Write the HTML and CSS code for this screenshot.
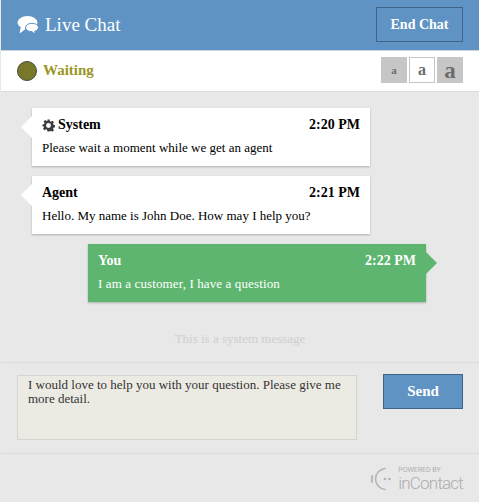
FILE: index.html
```html
<!DOCTYPE html>
<html lang="en">
<head>
  <meta charset="UTF-8">
  <meta name="viewport" content="width=device-width, initial-scale=1.0">
  <title>Live Chat</title>
  <link rel="stylesheet" href="styles.css">
</head>
<body>
  <header class="chat-header">
    <div class="chat-title">
      <svg class="chat-icon" width="22" height="20" viewBox="0 0 22 20">
        <ellipse cx="10.500" cy="7.500" rx="10" ry="6.500" fill="#fff"/>
        <path fill="#fff" d="M4 11l-1.500 7.500L10 13z"/>
        <ellipse cx="15" cy="12.500" rx="6.500" ry="4.200" fill="#fff" stroke="#5f93c3"/>
        <path fill="#fff" d="M14.500 15.500l3 3-.5-3.500z"/>
      </svg>
      <h1>Live Chat</h1>
    </div>
    <button class="end-chat">End Chat</button>
  </header>

  <div class="status-bar">
    <div class="status">
      <span class="status-dot"></span>
      <span class="status-text">Waiting</span>
    </div>
    <div class="font-sizes">
      <button class="size-btn size-small">a</button>
      <button class="size-btn size-medium active">a</button>
      <button class="size-btn size-large">a</button>
    </div>
  </div>

  <main class="messages">
    <div class="message from-them">
      <div class="message-head">
        <span class="sender">
          <svg class="gear" width="13" height="13" viewBox="0 0 24 24">
            <path fill="#3c3c3c" fill-rule="evenodd" d="M10 1h4l.7 3.200 1.800.8 2.800-1.800 2.800 2.800-1.800 2.800.8 1.800 3.100.700v4l-3.100.7-.8 1.800 1.800 2.800-2.800 2.800-2.800-1.800-1.800.8L14 23h-4l-.7-3.100-1.800-.8-2.800 1.800-2.800-2.800 1.800-2.800-.8-1.800L.9 14v-4l3.100-.7.8-1.800L3 4.700 5.700 2l2.800 1.800 1.800-.8zM12 7.500a4.500 4.500 0 1 0 0 9 4.500 4.500 0 0 0 0-9z"/>
          </svg>
          System
        </span>
        <span class="time">2:20 PM</span>
      </div>
      <p>Please wait a moment while we get an agent</p>
    </div>

    <div class="message from-them">
      <div class="message-head">
        <span class="sender">Agent</span>
        <span class="time">2:21 PM</span>
      </div>
      <p>Hello. My name is John Doe. How may I help you?</p>
    </div>

    <div class="message from-you">
      <div class="message-head">
        <span class="sender">You</span>
        <span class="time">2:22 PM</span>
      </div>
      <p>I am a customer, I have a question</p>
    </div>

    <p class="system-message">This is a system message</p>
  </main>

  <div class="composer">
    <textarea class="composer-input">I would love to help you with your question. Please give me more detail.</textarea>
    <button class="send">Send</button>
  </div>

  <footer class="chat-footer">
    <div class="brand">
      <svg width="22" height="24" viewBox="0 0 22 24">
        <g fill="none" stroke="#b4b4b4" stroke-linecap="round">
          <path stroke-width="1.500" d="M15 1.500C9.500 2.500 5.500 6.500 5.500 12s4 9.500 9.500 10.500"/>
          <path stroke-width="1.800" d="M2 9v6"/>
        </g>
        <circle cx="15" cy="12" r="1.300" fill="#b4b4b4"/>
        <circle cx="19.500" cy="12" r="1.300" fill="#b4b4b4"/>
      </svg>
      <div class="brand-text">
        <span class="powered">POWERED BY</span>
        <span class="brand-name">inContact</span>
      </div>
    </div>
  </footer>
</body>
</html>
```

FILE: styles.css
```css
* {
  box-sizing: border-box;
}

body {
  font-family: "Liberation Serif", serif;
  margin: 0;
  padding: 0 0 0 1px;
  height: 502px;
  overflow: hidden;
  background: #e8e8e8;
  color: #000;
  font-size: 13px;
}

button {
  font-family: inherit;
  cursor: pointer;
}

.chat-header {
  height: 51px;
  background: #5f93c3;
  border-bottom: 1px solid #c9d4de;
  display: flex;
  align-items: center;
  justify-content: space-between;
  padding: 0 16px 1px 16px;
}

.chat-title {
  display: flex;
  align-items: center;
  gap: 6px;
}

.chat-title h1 {
  font-size: 19px;
  font-weight: 400;
  margin: 0;
  color: #fff;
}

.end-chat {
  width: 87px;
  height: 35px;
  background: #5f93c3;
  border: 1px solid #3f6488;
  color: #fff;
  font-size: 14px;
  font-weight: 700;
}

.status-bar {
  height: 41px;
  background: #fff;
  border-bottom: 1px solid #dcdcdc;
  display: flex;
  align-items: center;
  justify-content: space-between;
  padding: 0 16px;
}

.status {
  display: flex;
  align-items: center;
  gap: 6px;
}

.status-dot {
  width: 20px;
  height: 20px;
  border-radius: 50%;
  background: #78782a;
  border: 1px solid #4a4a3a;
}

.status-text {
  color: #9b9626;
  font-size: 15px;
  font-weight: 700;
  padding-bottom: 2px;
}

.font-sizes {
  display: flex;
  gap: 2px;
  padding-bottom: 2px;
}

.size-btn {
  width: 26px;
  height: 26px;
  padding: 0;
  background: #c6c6c6;
  border: 0;
  color: #6c6c6c;
  font-weight: 700;
  line-height: 1;
}

.size-small {
  font-size: 11px;
}

.size-medium {
  font-size: 16px;
}

.size-large {
  font-size: 23px;
}

.size-btn.active {
  background: #fff;
  border: 1px solid #c6c6c6;
}

.messages {
  height: 270px;
  padding: 16px 0 0;
  display: flex;
  flex-direction: column;
  gap: 10px;
}

.message {
  position: relative;
  width: 338px;
  height: 58px;
  padding: 8px 10px;
  box-shadow: 0 1px 2px rgba(0, 0, 0, 0.25);
}

.message p {
  margin: 5px 0 0;
  line-height: 18px;
}

.message-head {
  display: flex;
  justify-content: space-between;
  font-size: 14px;
  font-weight: 700;
  line-height: 18px;
}

.sender {
  display: flex;
  align-items: center;
  gap: 3px;
}

.from-them {
  margin-left: 31px;
  background: #fff;
}

.from-them::before {
  content: "";
  position: absolute;
  left: -11px;
  top: 8px;
  border: 11px solid transparent;
  border-left: 0;
  border-right-color: #fff;
}

.from-you {
  margin-left: 87px;
  background: #5eb56f;
  color: #fff;
}

.from-you p {
  letter-spacing: 0.12px;
}

.from-you::after {
  content: "";
  position: absolute;
  right: -11px;
  top: 8px;
  border: 11px solid transparent;
  border-right: 0;
  border-left-color: #5eb56f;
}

.system-message {
  margin: 18px 0 0;
  text-align: center;
  color: #cfcfcf;
  line-height: 18px;
}

.composer {
  height: 91px;
  border-top: 1px solid #dcdcdc;
  display: flex;
  align-items: flex-start;
  justify-content: space-between;
  padding: 11px 16px 0;
}

.composer-input {
  width: 340px;
  height: 65px;
  margin-top: 1px;
  padding: 2px 10px 0;
  background: #ecebe3;
  border: 1px solid #d4d4d4;
  border-radius: 0;
  font-family: inherit;
  font-size: 13px;
  line-height: 14px;
  color: #333;
  resize: none;
  outline: none;
}

.send {
  width: 80px;
  height: 35px;
  background: #5f93c3;
  border: 1px solid #3f6488;
  color: #fff;
  font-size: 15px;
  font-weight: 700;
}

.chat-footer {
  border-top: 1px solid #dcdcdc;
  display: flex;
  justify-content: flex-end;
  padding: 12px 16px 0;
}

.brand {
  display: flex;
  align-items: center;
  gap: 6px;
  color: #aeaeae;
  font-family: Roboto, sans-serif;
}

.brand-text {
  display: flex;
  flex-direction: column;
}

.powered {
  font-size: 7px;
  line-height: 8px;
}

.brand-name {
  font-size: 17px;
  font-weight: 300;
  line-height: 18px;
  letter-spacing: -0.8px;
}
```
